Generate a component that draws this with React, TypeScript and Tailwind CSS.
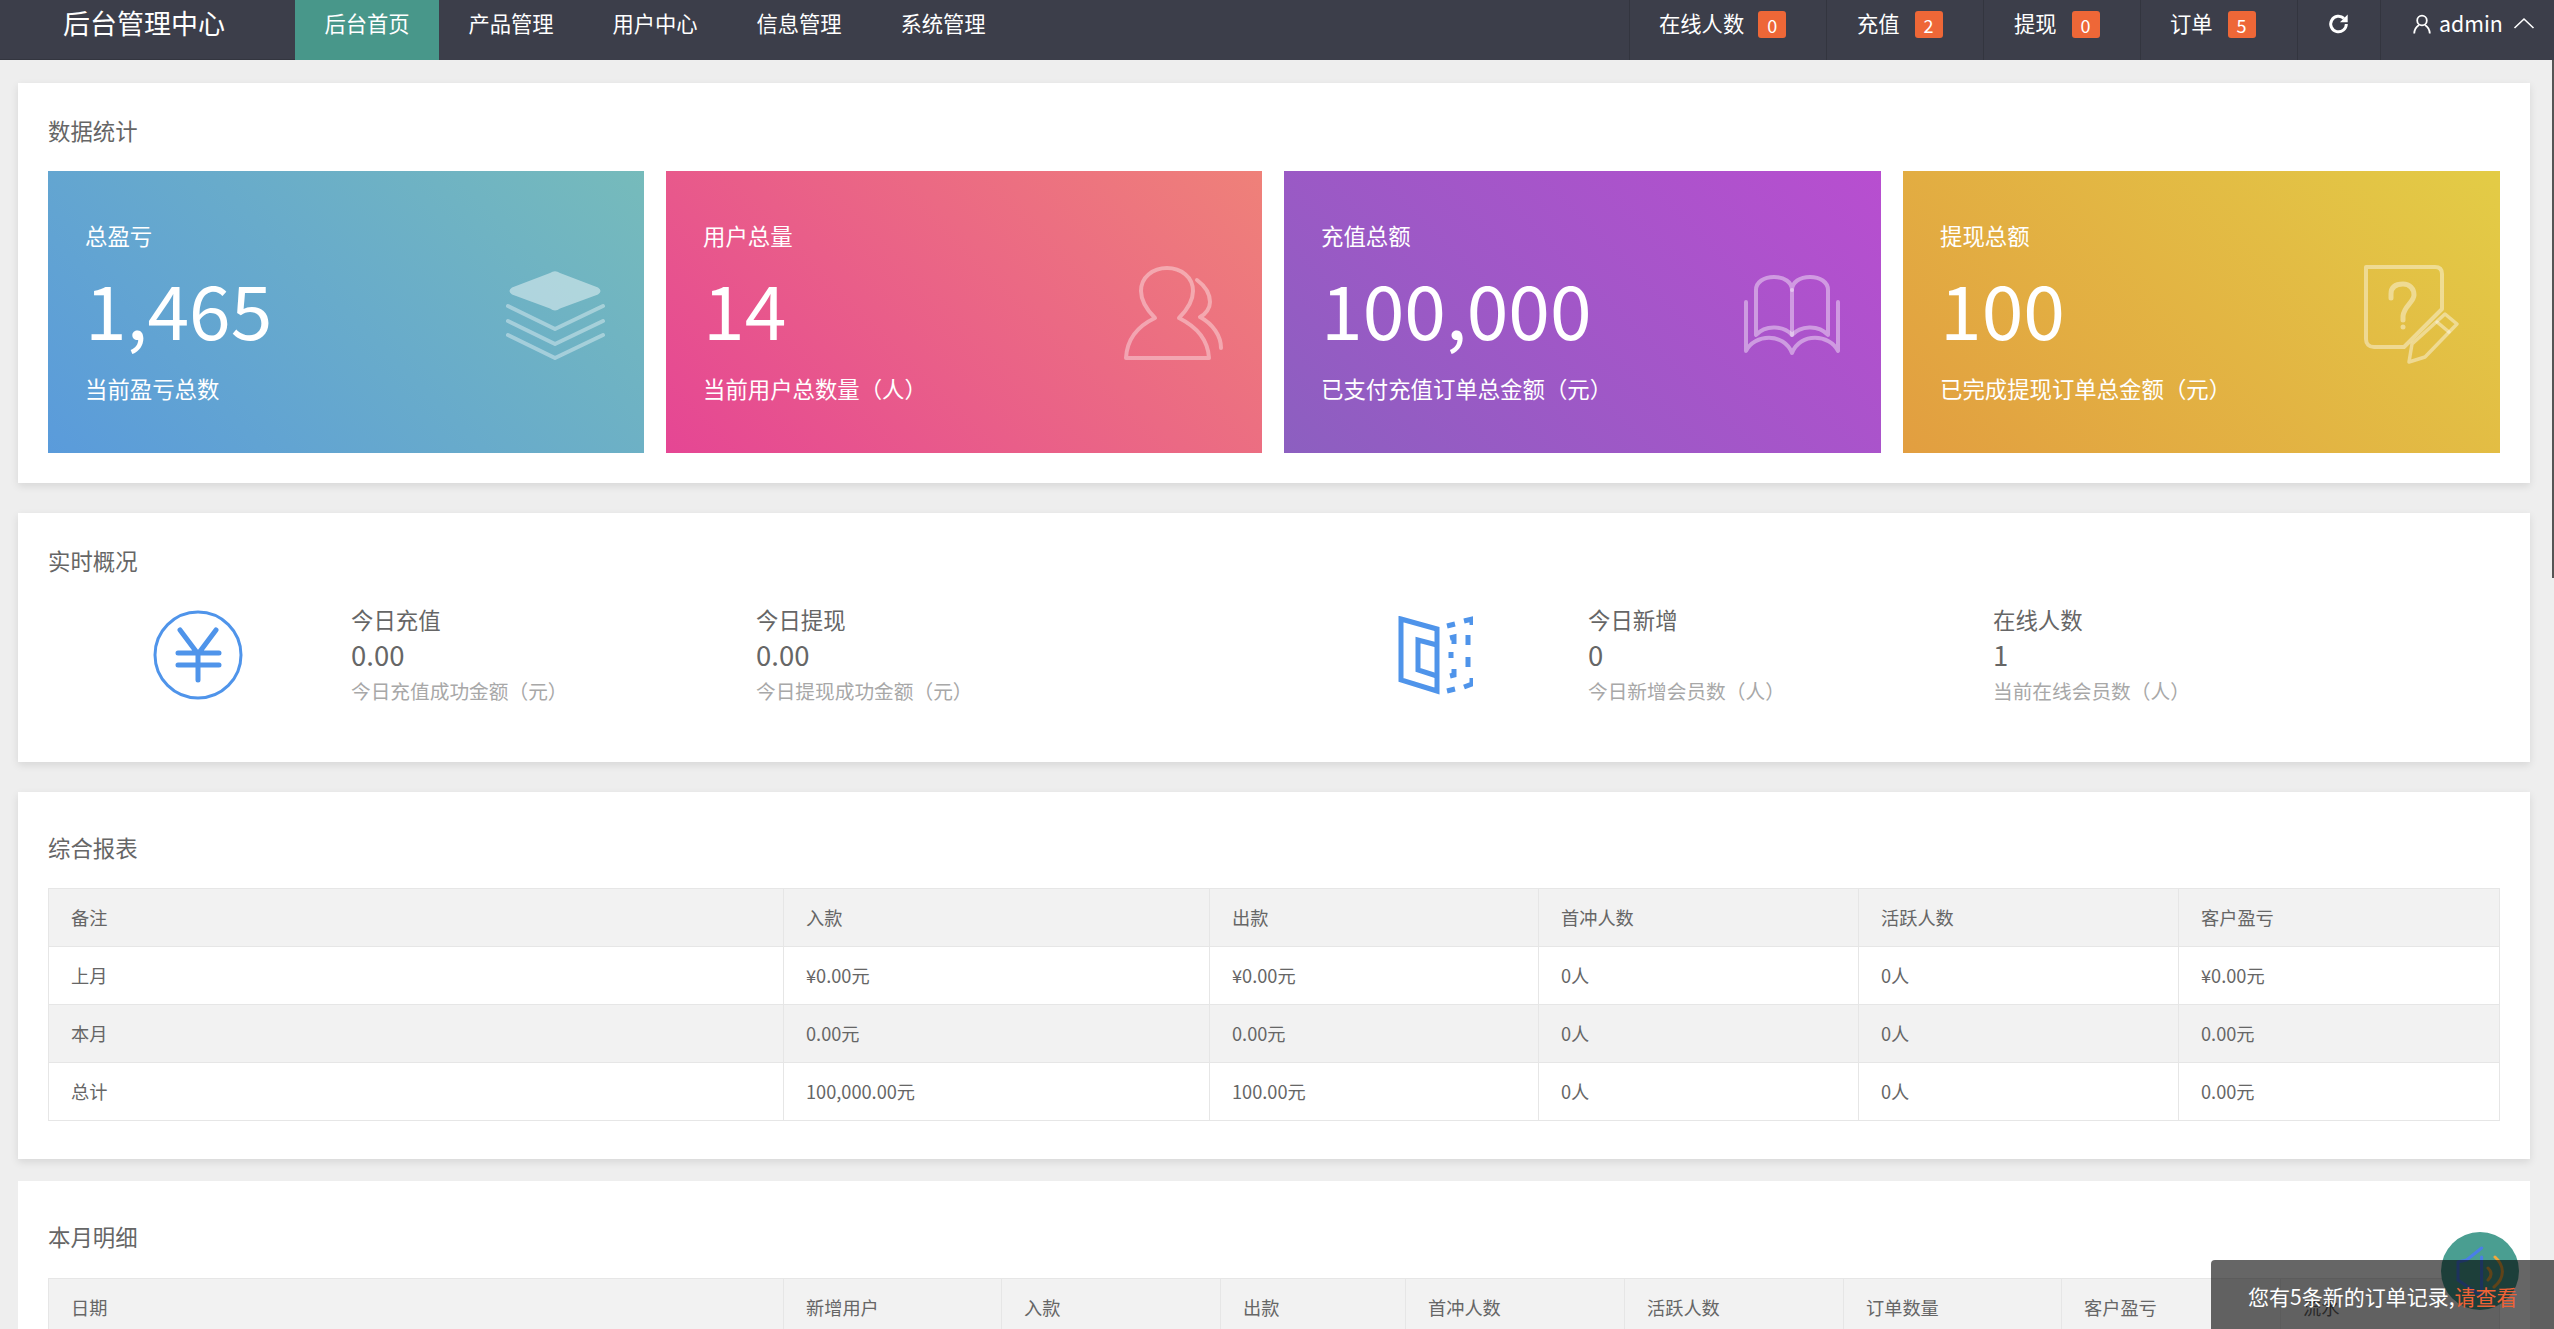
import React from "react";

const stats = [
  { title: "总盈亏", num: "1,465", sub: "当前盈亏总数", bg: "bg-[linear-gradient(45deg,#5a9bdb,#76bbbb)]", icon: "layers" },
  { title: "用户总量", num: "14", sub: "当前用户总数量（人）", bg: "bg-[linear-gradient(45deg,#e54694,#ef8179)]", icon: "person" },
  { title: "充值总额", num: "100,000", sub: "已支付充值订单总金额（元）", bg: "bg-[linear-gradient(45deg,#8c5fc0,#b84ed0)]", icon: "book" },
  { title: "提现总额", num: "100", sub: "已完成提现订单总金额（元）", bg: "bg-[linear-gradient(45deg,#e29e40,#e3cc46)]", icon: "doc" },
];

function StatIcon({ name }: { name: string }) {
  const common = { width: 100, height: 100, viewBox: "0 0 100 100", fill: "none", stroke: "#fff", strokeLinecap: "round" as const, strokeLinejoin: "round" as const };
  if (name === "layers")
    return (
      <svg {...common} strokeWidth={4} className="shrink-0">
        <path d="M45 9 Q50 5.5 55 9 L93 23.5 Q98 27 93 30.5 L55 44.5 Q50 48.5 45 44.5 L7 30.5 Q2 27 7 23.5 Z" fill="#fff" fillOpacity={0.45} stroke="none" />
        <g strokeOpacity={0.38}>
          <path d="M3 42 L50 65 L98 42" />
          <path d="M3 57 L50 80 L98 57" />
          <path d="M3 71 L50 94 L98 71" />
        </g>
      </svg>
    );
  if (name === "person")
    return (
      <svg {...common} strokeWidth={4} strokeOpacity={0.38} className="shrink-0">
        <path d="M3 94 C4 75 15 62 32 54 C22 44 18 36 18 27 C18 13 30 4 44 4 C58 4 70 13 70 27 C70 36 66 44 56 54 C72 62 85 75 86 94 Z" />
        <path d="M74 16 C82 22 87 30 87 38 C87 44 83 50 77 53 C90 60 98 72 98 84" />
      </svg>
    );
  if (name === "book")
    return (
      <svg {...common} strokeWidth={4} strokeOpacity={0.42} className="shrink-0">
        <path d="M14 71 V26 C14 18 22 13 32 13 C42 13 50 18 50 26 C50 18 58 13 68 13 C78 13 86 18 86 26 V71 C76 60 58 62 50 71 C42 62 24 60 14 71 Z" />
        <path d="M50 26 V71" />
        <path d="M4 38 V87 C12 70 42 68 50 89 C58 68 88 70 96 87 V38" />
      </svg>
    );
  return (
    <svg {...common} strokeWidth={4} strokeOpacity={0.42} className="shrink-0">
      <path d="M5 3 H74 C79 3 81 6 81 10 V45 L43 83 H13 C8 83 5 80 5 75 Z" />
      <path d="M30 34 V30 C30 22 36 20 42 20 C49 20 53 25 53 31 C53 38 43 42 42 52 V56" strokeWidth={5} />
      <circle cx={42} cy={63} r={2.5} fill="#fff" fillOpacity={0.42} stroke="none" />
      <path d="M84 50 L96 60 L64 93 L48 98 L51 80 Z" strokeWidth={3.5} />
      <path d="M76 58 L88 68" strokeWidth={3.5} />
    </svg>
  );
}

function Title({ text, big }: { text: string; big?: boolean }) {
  return <div className={`${big ? "pt-[38px]" : "pt-[30px]"} pb-[2px] text-[22.4px] leading-[34px] text-[#666]`}>{text}</div>;
}

function Kpi({ title, value, sub }: { title: string; value: string; sub: string }) {
  return (
    <div className="w-[405px] shrink-0 text-[#666]">
      <div className="text-[22.4px] leading-[34px]">{title}</div>
      <div className="text-[27.5px] leading-[36px]">{value}</div>
      <div className="text-[19.7px] leading-[38px] text-[#a8a8a8]">{sub}</div>
    </div>
  );
}

const cellBase = "border border-[#e6e6e6] px-[22px] text-left font-normal text-[18.2px] text-[#666]";

export default function App() {
  return (
    <div className="relative h-[1329px] w-[2554px] overflow-hidden bg-[#eeeeee] font-['Noto_Sans_CJK_SC','Noto_Sans',sans-serif]">
      <header className="flex h-[60px] bg-[#3c3e4a] text-[21.3px] text-white">
        <div className="h-[60px] w-[295px] border-b border-[#33353f] pl-[63px] text-[27px] leading-[45px]">后台管理中心</div>
        <nav className="flex">
          <div className="flex h-[60px] w-[144px] justify-center bg-[#48978a] leading-[45px]">后台首页</div>
          <div className="flex h-[60px] w-[144px] justify-center leading-[45px]">产品管理</div>
          <div className="flex h-[60px] w-[144px] justify-center leading-[45px]">用户中心</div>
          <div className="flex h-[60px] w-[144px] justify-center leading-[45px]">信息管理</div>
          <div className="flex h-[60px] w-[144px] justify-center leading-[45px]">系统管理</div>
        </nav>
        <div className="ml-auto flex">
          {[
            { t: "在线人数", n: "0", w: "w-[197px] pl-[29px]", g: "ml-[14px]" },
            { t: "充值", n: "2", w: "w-[157px] pl-[30px]", g: "ml-[15px]" },
            { t: "提现", n: "0", w: "w-[157px] pl-[30px]", g: "ml-[15px]" },
            { t: "订单", n: "5", w: "w-[157px] pl-[29px]", g: "ml-[15px]" },
          ].map((it) => (
            <div key={it.t} className={`flex h-[60px] ${it.w} items-start border-l border-[#33353f] leading-[45px]`}>
              <span>{it.t}</span>
              <span className={`${it.g} mt-[11px] flex h-[27px] w-[28px] items-center justify-center rounded-[3px] bg-[#ee6737] text-[18px] leading-none`}>{it.n}</span>
            </div>
          ))}
          <div className="flex h-[60px] w-[83px] justify-center border-l border-[#33353f] pt-[13px]">
            <svg width="22" height="22" viewBox="0 0 24 24" fill="none" stroke="#fff" strokeWidth="3.2">
              <path d="M20 12a8.5 8.5 0 1 1-2.6-6.1" />
              <path d="M21.5 1.5v8.5h-8.5z" fill="#fff" stroke="none" />
            </svg>
          </div>
          <div className="flex h-[60px] w-[174px] items-start border-l border-[#33353f] pl-[32px] leading-[45px]">
            <svg width="18" height="20" viewBox="0 0 18 20" fill="none" stroke="#fff" strokeWidth="1.8" className="mt-[14px]">
              <circle cx="9" cy="6.5" r="4.8" />
              <path d="M1.2 19.5 C1.5 15 3.5 12.5 6 11 M16.8 19.5 C16.5 15 14.5 12.5 12 11" />
            </svg>
            <span className="ml-[8px]">admin</span>
            <svg width="22" height="12" viewBox="0 0 22 12" fill="none" stroke="#fff" strokeWidth="1.6" className="ml-[10px] mt-[17px]">
              <path d="M1.5 11 L11 2 L20.5 11" />
            </svg>
          </div>
        </div>
      </header>

      <main className="pl-[18px] pr-[24px]">
        <section className="mt-[23px] bg-white px-[30px] pb-[30px] shadow-[0_3px_8px_rgba(0,0,0,0.1)]">
          <Title text="数据统计" />
          <div className="mt-[22px] grid grid-cols-[596px_596px_597px_597px] gap-[22px]">
            {stats.map((s) => (
              <div key={s.title} className={`flex h-[282px] items-center justify-between pl-[37px] pr-[39px] text-white ${s.bg}`}>
                <div className="self-start pt-[47px]">
                  <div className="text-[22.4px] leading-[34px]">{s.title}</div>
                  <div className="mt-[11px] text-[75px] leading-[90px]">{s.num}</div>
                  <div className="mt-[18px] text-[22.4px] leading-[34px]">{s.sub}</div>
                </div>
                <div className="mt-[3px]">
                  <StatIcon name={s.icon} />
                </div>
              </div>
            ))}
          </div>
        </section>

        <section className="mt-[30px] bg-white px-[30px] pb-[52px] shadow-[0_3px_8px_rgba(0,0,0,0.1)]">
          <Title text="实时概况" />
          <div className="mt-[23px] grid grid-cols-2 gap-[22px]">
            <div className="flex items-start">
              <div className="flex w-[303px] shrink-0 justify-center pr-[3px] pt-[8px]">
                <svg width="90" height="90" viewBox="0 0 90 90" fill="none" stroke="#4f94ea" strokeLinecap="round">
                  <circle cx="45" cy="45" r="43" strokeWidth="3" />
                  <path d="M27 20 L45 44 L63 20 M25 43 H66 M25 55 H66 M45 44 V70" strokeWidth="5" />
                </svg>
              </div>
              <Kpi title="今日充值" value="0.00" sub="今日充值成功金额（元）" />
              <Kpi title="今日提现" value="0.00" sub="今日提现成功金额（元）" />
            </div>
            <div className="flex items-start">
              <div className="flex w-[303px] shrink-0 justify-center pr-[2px] pt-[14px]">
                <svg width="75" height="80" viewBox="0 0 75 80" fill="none" stroke="#4f94ea" strokeWidth="5">
                  <path d="M3 3 L39 13 V75 L3 64 Z" />
                  <path d="M39 29 L20 24 V54 L39 60" />
                  <path d="M49 10 L57 8 M66 5 L74 3 V9 M70 19 V29 M70 41 V51 M74 62 V68 L66 71 M49 75 L57 73 M52 22 L56 21 V28 M53 36 V42 M52 60 L56 59 V53" />
                </svg>
              </div>
              <Kpi title="今日新增" value="0" sub="今日新增会员数（人）" />
              <Kpi title="在线人数" value="1" sub="当前在线会员数（人）" />
            </div>
          </div>
        </section>

        <section className="mt-[30px] bg-white px-[30px] pb-[38px] shadow-[0_3px_8px_rgba(0,0,0,0.1)]">
          <Title text="综合报表" big />
          <table className="mt-[22px] w-full table-fixed border-collapse">
            <thead>
              <tr className="h-[58px] bg-[#f2f2f2]">
                <th className={`${cellBase} w-[735px]`}>备注</th>
                <th className={`${cellBase} w-[426px]`}>入款</th>
                <th className={`${cellBase} w-[329px]`}>出款</th>
                <th className={`${cellBase} w-[320px]`}>首冲人数</th>
                <th className={`${cellBase} w-[320px]`}>活跃人数</th>
                <th className={cellBase}>客户盈亏</th>
              </tr>
            </thead>
            <tbody>
              <tr className="h-[58px]">
                {["上月", "¥0.00元", "¥0.00元", "0人", "0人", "¥0.00元"].map((c, i) => <td key={i} className={cellBase}>{c}</td>)}
              </tr>
              <tr className="h-[58px] bg-[#f2f2f2]">
                {["本月", "0.00元", "0.00元", "0人", "0人", "0.00元"].map((c, i) => <td key={i} className={cellBase}>{c}</td>)}
              </tr>
              <tr className="h-[58px]">
                {["总计", "100,000.00元", "100.00元", "0人", "0人", "0.00元"].map((c, i) => <td key={i} className={cellBase}>{c}</td>)}
              </tr>
            </tbody>
          </table>
        </section>

        <section className="mt-[22px] bg-white px-[30px] pb-[30px]">
          <Title text="本月明细" big />
          <table className="mt-[23px] w-full table-fixed border-collapse">
            <thead>
              <tr className="h-[58px] bg-[#f2f2f2]">
                <th className={`${cellBase} w-[735px]`}>日期</th>
                <th className={`${cellBase} w-[218px]`}>新增用户</th>
                <th className={`${cellBase} w-[219px]`}>入款</th>
                <th className={`${cellBase} w-[185px]`}>出款</th>
                <th className={`${cellBase} w-[219px]`}>首冲人数</th>
                <th className={`${cellBase} w-[219px]`}>活跃人数</th>
                <th className={`${cellBase} w-[218px]`}>订单数量</th>
                <th className={`${cellBase} w-[219px]`}>客户盈亏</th>
                <th className={cellBase}>流水</th>
              </tr>
            </thead>
          </table>
        </section>
      </main>

      <div className="absolute right-0 top-[60px] h-[518px] w-[2px] bg-[#555]" />

      <div className="absolute left-[2441px] top-[1232px] h-[78px] w-[78px] rounded-full bg-[#4a9e91]">
        <svg width="78" height="78" viewBox="0 0 78 78" fill="none" strokeLinecap="round" strokeLinejoin="round">
          <path d="M40.6 16 L25.6 28 L17 30 V48 L40.6 64.6 M40.6 25 V62" stroke="#4a7ee8" strokeWidth="3" />
          <path d="M54 25 C64 34 64 46 53 55 M47 36 C51 40 51 44 47 48" stroke="#f0a83c" strokeWidth="3" />
        </svg>
      </div>

      <div className="absolute bottom-0 right-0 h-[69px] w-[343px] rounded-tl-[4px] bg-black/60 pl-[37px] pt-[17px] text-[21px] leading-[38px] text-white">
        您有5条新的订单记录,<span className="text-[#ee6236]">请查看</span>
      </div>
    </div>
  );
}
